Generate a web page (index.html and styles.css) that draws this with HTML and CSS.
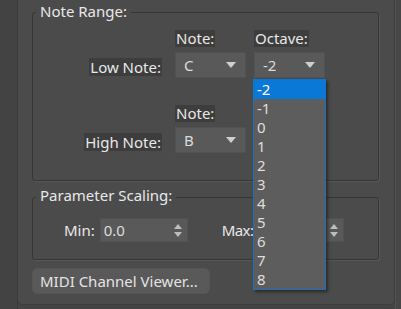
FILE: index.html
```html
<!DOCTYPE html>
<html>
<head>
<meta charset="utf-8">
<link rel="stylesheet" href="styles.css">
</head>
<body>
<div class="app">
  <div class="strip-left"></div>
  <div class="panel">
    <div class="group note-range">
      <span class="gtitle">Note Range:</span>
      <div class="note-grid">
        <span></span><span class="hdr">Note:</span><span class="hdr">Octave:</span>
        <span class="lbl">Low Note:</span>
        <div class="combo"><span>C</span><span class="arrow"></span></div>
        <div class="combo"><span>-2</span><span class="arrow"></span></div>
        <span></span><span></span><span></span>
        <span></span><span class="hdr">Note:</span><span></span>
        <span class="lbl">High Note:</span>
        <div class="combo"><span>B</span><span class="arrow"></span></div>
        <span></span>
      </div>
    </div>
    <div class="group scaling">
      <span class="gtitle">Parameter Scaling:</span>
      <div class="scale-row">
        <span class="slbl min">Min:</span>
        <div class="spin"><span>0.0</span><span class="spin-arrows"><span class="up"></span><span class="down"></span></span></div>
        <span class="slbl max">Max:</span>
        <div class="spin"><span></span><span class="spin-arrows"><span class="up"></span><span class="down"></span></span></div>
      </div>
    </div>
    <button class="btn">MIDI Channel Viewer...</button>
  </div>
  <div class="strip-right"></div>
  <ul class="list">
    <li class="sel">-2</li>
    <li>-1</li>
    <li>0</li>
    <li>1</li>
    <li>2</li>
    <li>3</li>
    <li>4</li>
    <li>5</li>
    <li>6</li>
    <li>7</li>
    <li>8</li>
  </ul>
</div>
</body>
</html>
```
FILE: styles.css
```css
* { box-sizing: border-box; }
html, body { margin: 0; padding: 0; }
body {
  background: #444444;
  font-family: "Noto Sans", "Open Sans", sans-serif;
  font-size: 15px;
  color: #e8e8e8;
}
.app {
  position: relative;
  display: flex;
  width: 401px;
  height: 309px;
  overflow: hidden;
}
.strip-left {
  flex: none;
  width: 18px;
  height: 309px;
  background: #434343;
  border-right: 1px solid #3b3b3b;
}
.panel {
  flex: none;
  width: 377px;
  height: 305px;
  background: #4b4b4b;
  border-right: 1px solid #3d3d3d;
  border-bottom: 1px solid #3d3d3d;
  border-bottom-left-radius: 5px;
  border-bottom-right-radius: 5px;
  padding: 12px 0 0 14px;
  display: flex;
  flex-direction: column;
  align-items: flex-start;
}
.strip-right {
  flex: none;
  width: 6px;
  height: 309px;
  background: #474747;
  border-left: 1px solid #545454;
}
.group {
  position: relative;
  width: 347px;
  border: 1px solid #363636;
  border-radius: 3px;
  box-shadow: 1px 1px 0 #575757;
}
.note-range { height: 169px; }
.scaling { height: 63px; margin-top: 16px; }
.gtitle {
  position: absolute;
  left: 3px;
  top: -11px;
  padding: 0 4px;
  background: #4b4b4b;
  line-height: 18px;
  white-space: nowrap;
}
.scaling .gtitle { top: -12px; }
.note-grid {
  display: grid;
  grid-template-columns: 142px 79px 71px;
  grid-template-rows: 17px 26px 17px 17px 26px;
  row-gap: 5px;
  padding-top: 17px;
}
.hdr {
  justify-self: start;
  line-height: 17px;
  background: #3d3d3d;
  padding: 0 1px;
  white-space: nowrap;
}
.lbl {
  justify-self: end;
  align-self: end;
  margin-right: 13px;
  margin-bottom: 2px;
  line-height: 18px;
  background: #3d3d3d;
  padding: 0 1px;
  white-space: nowrap;
}
.combo {
  width: 71px;
  height: 26px;
  background: #595959;
  border: 1px solid #525252;
  display: flex;
  align-items: center;
  justify-content: space-between;
  padding: 0 9px 0 8px;
  color: #dcdcdc;
}
.arrow {
  width: 0;
  height: 0;
  border-left: 5px solid transparent;
  border-right: 5px solid transparent;
  border-top: 6px solid #cfcfcf;
}
.scale-row {
  display: flex;
  align-items: center;
  padding: 20px 0 0 31px;
}
.slbl { line-height: 18px; white-space: nowrap; }
.min { margin-right: 5px; }
.max { margin-left: 34px; margin-right: 3px; letter-spacing: -0.6px; }
.spin {
  width: 88px;
  height: 24px;
  background: #595959;
  border: 1px solid #525252;
  display: flex;
  align-items: center;
  justify-content: space-between;
  padding: 0 5px 0 3px;
  color: #dcdcdc;
}
.spin-arrows {
  display: flex;
  flex-direction: column;
  gap: 3px;
}
.up, .down {
  width: 0;
  height: 0;
  border-left: 4px solid transparent;
  border-right: 4px solid transparent;
}
.up { border-bottom: 5px solid #bdbdbd; }
.down { border-top: 5px solid #bdbdbd; }
.btn {
  margin-top: 8px;
  width: 178px;
  height: 26px;
  background: #595959;
  border: 1px solid #555555;
  border-radius: 5px;
  color: #e4e4e4;
  font-family: inherit;
  font-size: 15px;
  text-align: left;
  padding: 0 0 0 7px;
  line-height: 24px;
}
.list {
  position: absolute;
  left: 253px;
  top: 79px;
  width: 73px;
  margin: 0;
  padding: 0;
  list-style: none;
  background: #5d5d5d;
  border: 1px solid #1b6fc4;
  border-top: none;
  box-shadow: 2px 2px 3px rgba(0, 0, 0, 0.45);
}
.list li {
  height: 19px;
  line-height: 19px;
  padding-left: 3px;
  color: #dedede;
}
.list li.sel {
  height: 20px;
  line-height: 21px;
  margin: 0 -1px;
  padding-left: 4px;
  background: #0a78d6;
  color: #ffffff;
}
```
